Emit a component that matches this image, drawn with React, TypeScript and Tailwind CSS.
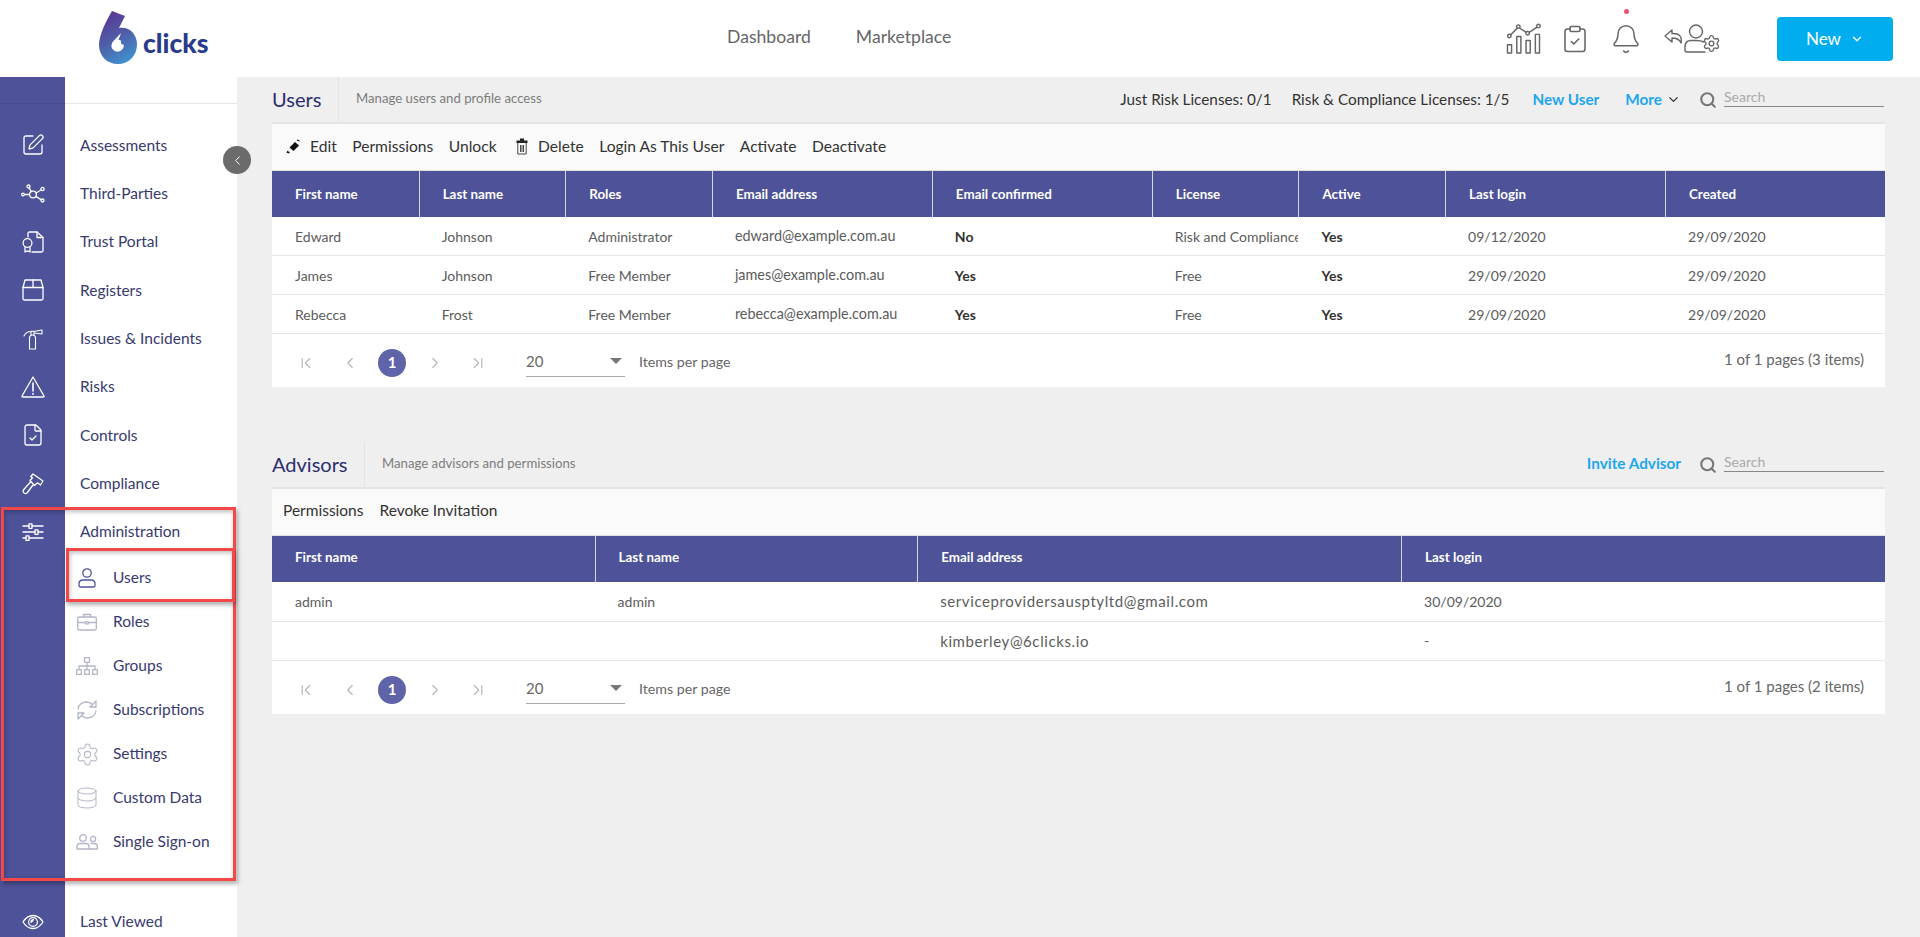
import { Bell, ClipboardCheck, ChevronDown, ChevronFirst, ChevronLast, ChevronLeft, ChevronRight, Search, Settings, Database, SquarePen, FileCheck } from "lucide-react"
import type { ReactNode } from "react"

const s = { fill: "none", stroke: "currentColor", strokeWidth: 1.3, strokeLinecap: "round", strokeLinejoin: "round" } as const

function Logo() {
  return (
    <svg width="40" height="54" viewBox="0 0 40 54">
      <defs>
        <linearGradient id="six" x1="0.3" y1="0" x2="0.7" y2="1">
          <stop offset="0" stopColor="#5a3692" />
          <stop offset="0.5" stopColor="#4e5fa8" />
          <stop offset="1" stopColor="#3f93cf" />
        </linearGradient>
      </defs>
      <path d="M14 0 L27 5 L21 17 C31 15 39 23 39 33 C39 45 31 53 20 53 C9 53 1 45 1 34 C1 24 8 10 14 0 Z" fill="url(#six)" />
      <path d="M23 22 L15.5 30 C13 33 13 36 14.5 38 C16.5 41 21 41.5 23.5 39 C22 38 19 37 19.5 33 C20 29 22 26 23 22 Z" fill="#fff" />
      <circle cx="20" cy="34.5" r="5.8" fill="#fff" />
      <circle cx="25.5" cy="31" r="2.6" fill="#4a6fb4" />
    </svg>
  )
}

function EditIcon() {
  return <SquarePen size={24} strokeWidth={1.3} />
}
function NetworkIcon() {
  return (
    <svg width="24" height="20" viewBox="0 0 24 20" {...s}>
      <circle cx="12" cy="10.5" r="3.4" />
      <circle cx="7.5" cy="2.5" r="1.5" />
      <circle cx="21.5" cy="5" r="1.6" />
      <circle cx="21.5" cy="16.5" r="1.5" />
      <circle cx="2" cy="10.5" r="1.3" />
      <path d="M8.3 4 L10.3 7.6 M20 6 L15 9 M20 15.6 L14.8 12.4 M4.2 10.5 H8" />
    </svg>
  )
}
function TrustIcon() {
  return (
    <svg width="22" height="22" viewBox="0 0 22 22" {...s}>
      <path d="M6 6 V2.5 Q6 1 7.5 1 H15 L21 6.5 V19.5 Q21 21 19.5 21 H10" />
      <path d="M15 1 V6.5 H21" />
      <circle cx="5.5" cy="12" r="4.4" />
      <path d="M3 16 V21 L5.5 19.8 L8 21 V16" />
    </svg>
  )
}
function BoxIcon() {
  return (
    <svg width="22" height="22" viewBox="0 0 22 22" {...s}>
      <path d="M3 1 H19 L21 8.5 V19.5 Q21 21 19.5 21 H2.5 Q1 21 1 19.5 V8.5 Z" />
      <path d="M1 8.5 H21 M11 1 V8.5" />
    </svg>
  )
}
function ExtinguisherIcon() {
  return (
    <svg width="20" height="22" viewBox="0 0 20 22" {...s} strokeWidth="1.1">
      <path d="M6.5 10 Q6.5 7 9.5 7 Q12.5 7 12.5 10 V21 H6.5 Z" />
      <path d="M8 7 V3.2 H11 V7 M11 3.5 L19 2 V6 L11 5 M8 3.5 Q3 3.5 1 8" />
    </svg>
  )
}
function AlertIcon() {
  return (
    <svg width="24" height="22" viewBox="0 0 24 22" {...s}>
      <path d="M12 1 L23 20 Q23.3 21 22 21 H2 Q0.7 21 1 20 Z" />
      <path d="M12 7 V15 M12 17.5 V18.2" strokeWidth="1.6" />
    </svg>
  )
}
function GavelIcon() {
  return (
    <svg width="22" height="22" viewBox="0 0 22 22" {...s}>
      <path d="M11 1 L21 8 L18.5 12 L15.5 9.8 L12.5 12.5 L8 7.5 L10.5 4.8 L8.8 3.5 Z" />
      <path d="M8.5 9 L1.8 16.5 Q0.5 18 1.7 19.6 Q3.3 21.4 5 20 L11 12" />
    </svg>
  )
}
function SlidersIcon() {
  return (
    <svg width="22" height="18" viewBox="0 0 22 18" {...s}>
      <path d="M1 3 H7 M10 3 H21 M1 9 H13 M16 9 H21 M1 15 H4 M7 15 H21" />
      <rect x="7" y="0.8" width="3" height="4.5" />
      <rect x="13" y="6.8" width="3" height="4.5" />
      <rect x="4" y="12.8" width="3" height="4.5" />
    </svg>
  )
}
function EyeIcon() {
  return (
    <svg width="22" height="16" viewBox="0 0 22 16" {...s}>
      <path d="M1 8 Q5 1.5 11 1.5 Q17 1.5 21 8 Q17 14.5 11 14.5 Q5 14.5 1 8 Z" />
      <circle cx="11" cy="8" r="4.4" />
      <path d="M9 8 A2.4 2.4 0 0 1 11.5 5.6 L9.5 8 Z" fill="currentColor" />
    </svg>
  )
}
function UserIcon() {
  return (
    <svg width="18" height="20" viewBox="0 0 18 20" {...s}>
      <circle cx="9" cy="5" r="4.2" />
      <path d="M1 16 Q1 12 5 12 H13 Q17 12 17 16 V17.5 Q17 19 15.5 19 H2.5 Q1 19 1 17.5 Z" />
    </svg>
  )
}
function BriefcaseIcon() {
  return (
    <svg width="20" height="18" viewBox="0 0 20 18" {...s}>
      <rect x="0.7" y="4" width="18.6" height="13" rx="1.5" />
      <path d="M6.5 4 V1.5 H13.5 V4 M0.7 9.5 H8.5 M11.5 9.5 H19.3 M8.5 8.8 H11.5 V10.8 H8.5 Z" />
    </svg>
  )
}
function TreeIcon() {
  return (
    <svg width="22" height="18" viewBox="0 0 22 18" {...s}>
      <rect x="8.5" y="0.7" width="5" height="4.6" />
      <rect x="0.7" y="12.7" width="4.6" height="4.6" />
      <rect x="8.7" y="12.7" width="4.6" height="4.6" />
      <rect x="16.7" y="12.7" width="4.6" height="4.6" />
      <path d="M11 5.3 V12.7 M3 12.7 V9 H19 V12.7" />
    </svg>
  )
}
function SyncIcon() {
  return (
    <svg width="20" height="20" viewBox="0 0 20 20" {...s}>
      <path d="M1 9 Q2 2.5 9.5 2 Q13 2 15.5 4.5 L19 1 V7 H13 L15.5 4.5" />
      <path d="M19 11 Q18 17.5 10.5 18 Q7 18 4.5 15.5 L1 19 V13 H7 L4.5 15.5" />
    </svg>
  )
}
function UsersIcon() {
  return (
    <svg width="22" height="16" viewBox="0 0 22 16" {...s}>
      <circle cx="7" cy="4" r="3.3" />
      <circle cx="17" cy="5" r="2.6" />
      <path d="M1 12.5 Q1 9.5 4 9.5 H10 Q13 9.5 13 12.5 V15 H1 Z M15 9.5 H18.5 Q21.3 9.5 21.3 12.5 V15 H13" />
    </svg>
  )
}
function ChartIcon() {
  return (
    <svg width="36" height="31" viewBox="0 0 34 30" {...s} strokeWidth="1.4">
      <path d="M3 12.5 L11.5 4 L20.5 10 L30.5 3.5" />
      <circle cx="2.8" cy="12.5" r="1.7" fill="#fff" />
      <circle cx="11.5" cy="3.5" r="1.7" fill="#fff" />
      <circle cx="20.5" cy="10" r="1.7" fill="#fff" />
      <circle cx="31" cy="3" r="1.7" fill="#fff" />
      <rect x="1" y="21" width="4" height="8" />
      <rect x="10" y="13" width="4" height="16" />
      <rect x="19" y="17" width="4" height="12" />
      <rect x="28" y="11" width="4" height="18" />
    </svg>
  )
}
function UserGearIcon() {
  return (
    <svg width="57" height="30" viewBox="0 0 57 30" {...s} strokeWidth="1.4">
      <path d="M8 6 L1 12 L8 18 V14 Q15 14 17 19 Q19 9 8 9.5 Z" />
      <circle cx="32" cy="7.5" r="6.5" />
      <path d="M40 18 Q36.5 16.5 32 16.5 H27 Q21 16.5 21 23 V26 Q21 28 23 28 H41" />
      <Settings x="38" y="10" width="19" height="19" strokeWidth={1.7} />
    </svg>
  )
}
function PenIcon() {
  return (
    <svg width="15" height="15" viewBox="0 0 15 15">
      <path d="M9 3 L13 6.5 L7.5 12 L3.5 8.5 Z" fill="#111" />
      <path d="M11 1 L13.5 2 M2 13.5 H3.5 M1 14 L2 12" stroke="#111" strokeWidth="1.3" fill="none" />
    </svg>
  )
}
function TrashIcon() {
  return (
    <svg width="12" height="17" viewBox="0 0 12 17">
      <path d="M0.5 2.5 H11.5 V5 H0.5 Z M4 0.5 H8 V2.5 H4 Z" fill="#222" />
      <path d="M1.8 5 V16 H10.2 V5 M4.5 7 V14 M6 7 V14 M7.5 7 V14" fill="none" stroke="#333" strokeWidth="0.9" />
    </svg>
  )
}

const mainIcons = [EditIcon, NetworkIcon, TrustIcon, BoxIcon, ExtinguisherIcon, AlertIcon, () => <FileCheck size={24} strokeWidth={1.3} />, GavelIcon, SlidersIcon]
const mainItems = ["Assessments", "Third-Parties", "Trust Portal", "Registers", "Issues & Incidents", "Risks", "Controls", "Compliance", "Administration"]
const subItems = [
  { label: "Users", icon: <UserIcon />, active: true },
  { label: "Roles", icon: <BriefcaseIcon /> },
  { label: "Groups", icon: <TreeIcon /> },
  { label: "Subscriptions", icon: <SyncIcon /> },
  { label: "Settings", icon: <Settings size={25} strokeWidth={1} /> },
  { label: "Custom Data", icon: <Database size={24} strokeWidth={1} /> },
  { label: "Single Sign-on", icon: <UsersIcon /> },
]

function Sidebar() {
  return (
    <div className="flex w-[237px] shrink-0 bg-white">
      <div className="flex w-[65px] shrink-0 flex-col bg-[#4d5299] text-white">
        <div className="mb-[17px] h-[27px] shrink-0 border-b border-[#474b8e]" />
        {mainIcons.map((Icon, i) => (
          <div key={i} className="flex h-[48.35px] shrink-0 items-center justify-center">
            <Icon />
          </div>
        ))}
        <div className="mt-auto flex h-[30px] items-center justify-center">
          <EyeIcon />
        </div>
      </div>
      <div className="flex flex-1 flex-col text-[15.5px] text-[#37396f]">
        <div className="mb-[17px] h-[27px] shrink-0 border-b border-[#e6e6e6]" />
        {mainItems.map((item) => (
          <div key={item} className="flex h-[48.35px] shrink-0 items-center pl-[15px]">
            {item}
          </div>
        ))}
        {subItems.map((item) => (
          <div key={item.label} className="flex h-[44px] shrink-0 items-center">
            <div className={`flex w-[48px] shrink-0 justify-center pr-[4px] ${item.active ? "text-[#4d5299]" : "text-[#b3b5c9]"}`}>
              {item.icon}
            </div>
            <span>{item.label}</span>
          </div>
        ))}
        <div className="mt-auto flex h-[30px] items-center pl-[15px]">Last Viewed</div>
      </div>
    </div>
  )
}

function SearchBox() {
  return (
    <div className="ml-[18px] flex items-center">
      <Search size={18} strokeWidth={2.8} className="text-[#777]" />
      <div className="mb-[5px] ml-[7px] w-[160px] border-b border-[#888] text-[14px] leading-[18px] text-[#aaa]">Search</div>
    </div>
  )
}

function Heading({ title, sub, divider, children }: { title: string; sub: string; divider: string; children: ReactNode }) {
  return (
    <div className="flex h-[47px] items-center border-b-2 border-[#e4e4e4] text-[15.3px]">
      <div className={`flex h-full ${divider} shrink-0 items-center border-r border-[#e2e2e8] pb-[2px] text-[20px] text-[#2c2e6e]`}>{title}</div>
      <div className="pb-px pl-[17px] text-[13.2px] text-[#7d7d7d]">{sub}</div>
      <div className="ml-auto flex items-center pr-px">{children}</div>
    </div>
  )
}

function Pager({ summary }: { summary: string }) {
  return (
    <div className="flex h-[53px] items-center bg-white pl-[25px] pr-[21px] text-[14.2px] text-[#666]">
      <div className="flex items-center pt-[4px] text-[#b5b5b5]">
        <ChevronFirst size={18} strokeWidth={1.5} />
        <ChevronLeft size={18} strokeWidth={1.5} className="ml-[26px]" />
        <div className="ml-[19px] flex h-[28px] w-[28px] items-center justify-center rounded-full bg-[#5f64a8] text-[15px] font-bold text-white">1</div>
        <ChevronRight size={18} strokeWidth={1.5} className="ml-[20px]" />
        <ChevronLast size={18} strokeWidth={1.5} className="ml-[25px]" />
      </div>
      <div className="mb-[10px] ml-[39px] flex h-[29px] w-[99px] items-center justify-between self-end border-b border-[#aaa] pb-[2px]">
        <span className="text-[15px]">20</span>
        <span className="mr-[3px] h-0 w-0 border-x-[6px] border-t-[6px] border-x-transparent border-t-[#777]" />
      </div>
      <span className="ml-[14px] pt-[2px] text-[#666]">Items per page</span>
      <span className="ml-auto pb-[2px] text-[15px] text-[#666]">{summary}</span>
    </div>
  )
}

const userRows = [
  ["Edward", "Johnson", "Administrator", "edward@example.com.au", "No", "Risk and Compliance", "Yes", "09/12/2020", "29/09/2020"],
  ["James", "Johnson", "Free Member", "james@example.com.au", "Yes", "Free", "Yes", "29/09/2020", "29/09/2020"],
  ["Rebecca", "Frost", "Free Member", "rebecca@example.com.au", "Yes", "Free", "Yes", "29/09/2020", "29/09/2020"],
]
const userCols = ["First name", "Last name", "Roles", "Email address", "Email confirmed", "License", "Active", "Last login", "Created"]

const advisorRows = [
  ["admin", "admin", "serviceprovidersausptyltd@gmail.com", "30/09/2020"],
  ["", "", "kimberley@6clicks.io", "-"],
]
const advisorCols = ["First name", "Last name", "Email address", "Last login"]

type TableProps = {
  cols: string[]
  rows: string[][]
  grid: string
  rowH: string
  emailCol: number
  emailText: string
  boldCols?: number[]
  headPad?: string
}

function Table({ cols, rows, grid, rowH, emailCol, emailText, boldCols = [], headPad = "" }: TableProps) {
  return (
    <div>
      <div className={`grid h-[46px] ${grid} bg-[#4d5299] text-[13.4px] font-bold text-white`}>
        {cols.map((c, i) => (
          <div key={c} className={`flex items-center pl-[23px] ${headPad} ${i > 0 ? "border-l border-[#d5d6e8]" : ""}`}>{c}</div>
        ))}
      </div>
      {rows.map((row, r) => (
        <div key={r} className={`grid ${rowH} ${grid} border-b border-[#e6e6e6] bg-white text-[14px] text-[#5c5c5c]`}>
          {row.map((cell, i) => (
            <div
              key={i}
              className={`flex items-center overflow-hidden whitespace-nowrap pl-[23px] ${boldCols.includes(i) ? "font-bold text-[#333]" : ""} ${i === emailCol ? emailText : ""}`}
            >
              {cell}
            </div>
          ))}
        </div>
      ))}
    </div>
  )
}

export default function App() {
  return (
    <div className="relative flex h-[937px] w-[1920px] flex-col overflow-hidden bg-white [font-family:Lato,sans-serif]">
      <header className="flex h-[77px] shrink-0 items-center">
        <div className="flex w-[727px] shrink-0 items-end pb-px pl-[98px]">
          <Logo />
          <span className="mb-[7px] ml-[5px] text-[26.5px] leading-[30px] font-black text-[#2a3a8c]">clicks</span>
        </div>
        <nav className="flex gap-[45px] pb-[2px] text-[17.6px] text-[#666]">
          <span>Dashboard</span>
          <span>Marketplace</span>
        </nav>
        <div className="ml-auto flex items-center pr-[27px] text-[#666]">
          <ChartIcon />
          <ClipboardCheck size={30} strokeWidth={1.25} className="ml-[18px]" />
          <div className="relative ml-[20px] flex">
            <Bell size={32} strokeWidth={1.15} />
            <span className="absolute top-[-14px] left-[14px] h-[5px] w-[5px] rounded-full bg-[#f0506e]" />
          </div>
          <div className="ml-[22px]"><UserGearIcon /></div>
          <button className="ml-[56px] flex h-[44px] w-[116px] items-center justify-center gap-[9px] rounded-[4px] bg-[#00aeef] text-[17px] text-white">
            New <ChevronDown size={14} strokeWidth={2.2} />
          </button>
        </div>
      </header>

      <div className="flex min-h-0 flex-1">
        <Sidebar />
        <main className="min-w-0 flex-1 bg-[#efefef] px-[35px]">
          <Heading title="Users" sub="Manage users and profile access" divider="w-[67px]">
            <span className="text-[#333]">Just Risk Licenses: 0/1</span>
            <span className="ml-[20px] text-[#333]">Risk &amp; Compliance Licenses: 1/5</span>
            <span className="ml-[23px] font-bold text-[#1ea7ee]">New User</span>
            <span className="ml-[26px] font-bold text-[#1ea7ee]">More</span>
            <ChevronDown size={15} strokeWidth={1.7} className="ml-[4px] text-[#222]" />
            <SearchBox />
          </Heading>
          <div className="flex h-[47px] items-center gap-[15.5px] border-b border-[#e0e0e0] bg-[#fafafa] pl-[14px] text-[15.6px] text-[#333]">
            <span className="flex items-center gap-[9px]"><PenIcon />Edit</span>
            <span>Permissions</span>
            <span>Unlock</span>
            <span className="ml-[4px] flex items-center gap-[10px]"><TrashIcon />Delete</span>
            <span>Login As This User</span>
            <span>Activate</span>
            <span>Deactivate</span>
          </div>
          <Table cols={userCols} rows={userRows} grid="grid-cols-[2fr_2fr_2fr_3fr_3fr_2fr_2fr_3fr_3fr]" rowH="h-[39px]" boldCols={[4, 6]} emailCol={3} emailText="text-[14.4px]" />
          <Pager summary="1 of 1 pages (3 items)" />

          <div className="h-[55px]" />

          <Heading title="Advisors" sub="Manage advisors and permissions" divider="w-[93px]">
            <span className="pb-[2px] font-bold text-[#1ea7ee]">Invite Advisor</span>
            <SearchBox />
          </Heading>
          <div className="flex h-[47px] items-center gap-[16px] border-b border-[#e0e0e0] bg-[#fafafa] pb-[2px] pl-[11px] text-[15.5px] text-[#333]">
            <span>Permissions</span>
            <span>Revoke Invitation</span>
          </div>
          <Table cols={advisorCols} rows={advisorRows} grid="grid-cols-[2fr_2fr_3fr_3fr]" rowH="h-[39.5px]" emailCol={2} emailText="text-[15px] tracking-[0.6px]" headPad="pb-[3px]" />
          <Pager summary="1 of 1 pages (2 items)" />
        </main>
      </div>

      {/* collapse button */}
      <div className="absolute top-[146px] left-[223px] flex h-[28px] w-[28px] items-center justify-center rounded-full bg-[#6b6b6b] text-white">
        <ChevronLeft size={15} strokeWidth={1.6} />
      </div>
      {/* red annotation boxes */}
      <div className="absolute top-[507px] left-[1px] h-[374px] w-[235px] border-[3px] border-[#f44848] shadow-[2px_3px_4px_rgba(0,0,0,0.3),inset_1px_2px_4px_rgba(0,0,0,0.25)]" />
      <div className="absolute top-[548px] left-[66px] h-[54px] w-[169px] border-[3px] border-[#f44848] shadow-[1px_3px_4px_rgba(0,0,0,0.3),inset_1px_2px_4px_rgba(0,0,0,0.25)]" />
    </div>
  )
}
